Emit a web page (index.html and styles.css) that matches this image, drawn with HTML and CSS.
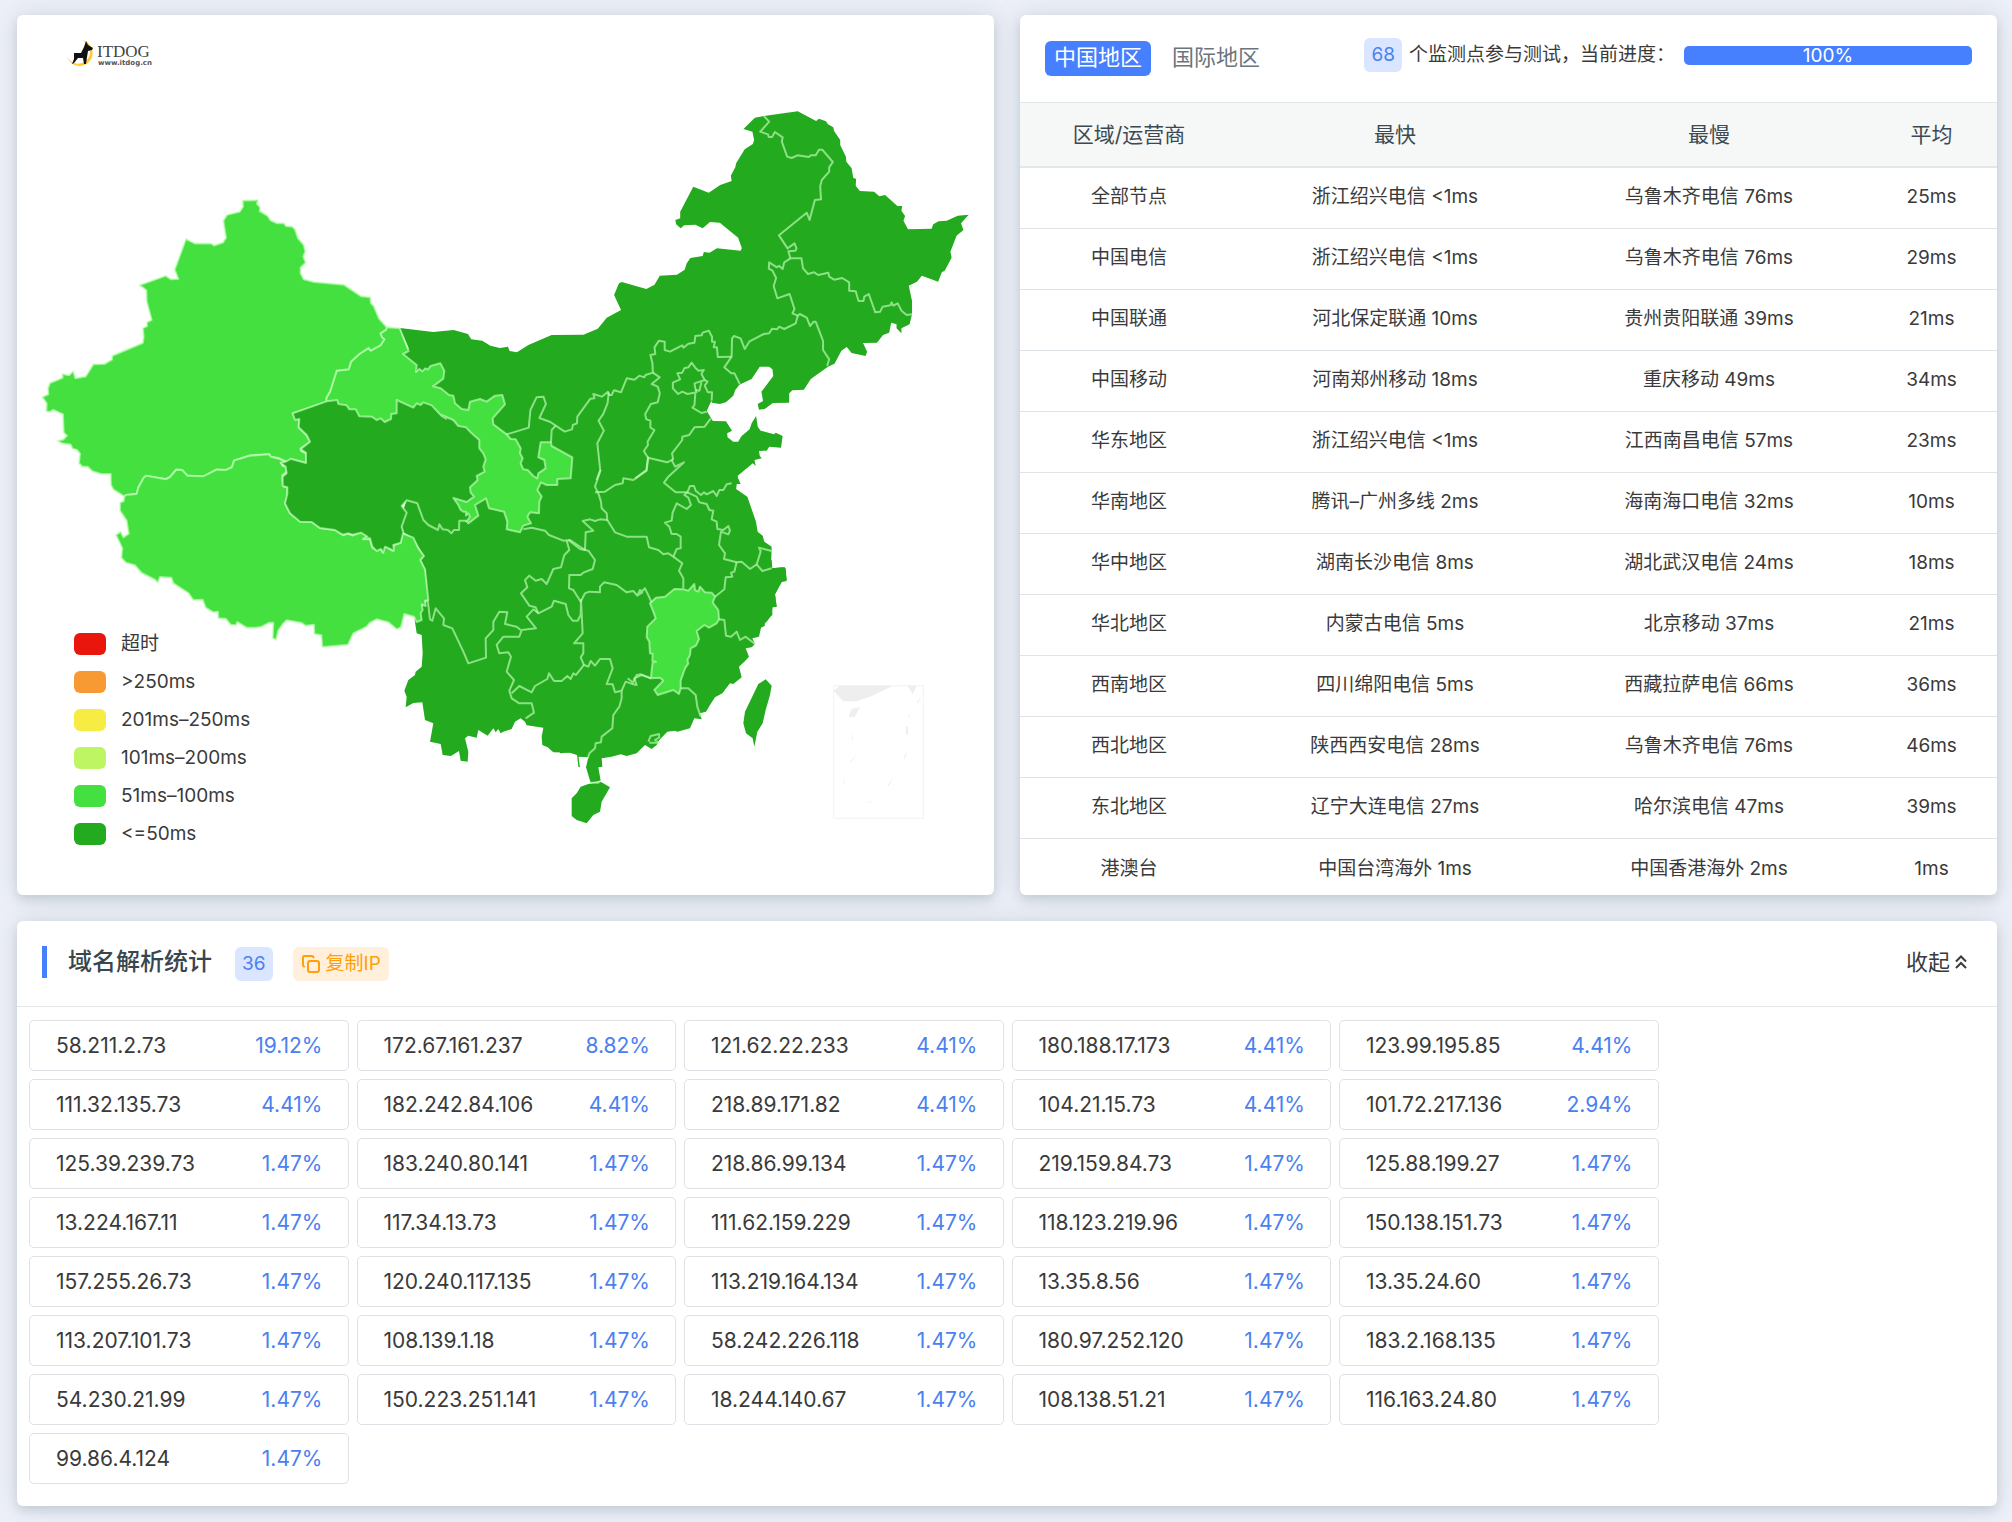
FILE: index.html
```html
<!DOCTYPE html>
<html lang="zh-CN">
<head>
<meta charset="utf-8">
<title>ITDOG</title>
<link rel="stylesheet" href="styles.css">
</head>
<body>
<main class="page">
  <div class="top">
    <section class="card map-card">
      <svg class="map" viewBox="17 15 977 880" role="img" aria-label="中国地图">
        <!-- mainland -->
        <g class="fast">
          <polygon transform="matrix(.40816 0 0 .33333 370 80)" points="73,744 155,756 205,750 240,762 248,778 275,782 295,797 318,804 338,800 342,813 360,817 388,795 445,765 523,764 558,746 580,713 615,690 598,645 610,610 617,606 677,627 697,614 710,587 752,584 771,569 776,550 785,534 815,528 818,516 832,518 850,505 873,508 908,512 911,505 902,473 857,428 833,426 815,445 797,434 770,436 761,445 750,433 748,420 760,415 760,395 792,320 830,338 858,315 886,303 884,287 895,262 897,250 918,208 938,192 941,180 937,155 915,147 943,113 965,108 1048,94 1093,123 1100,116 1117,124 1122,133 1135,142 1137,153 1152,180 1152,195 1166,230 1167,245 1180,265 1184,293 1191,297 1190,317 1200,333 1235,335 1248,349 1262,345 1292,378 1304,378 1302,392 1311,408 1307,422 1318,448 1376,446 1380,433 1393,424 1413,422 1440,407 1467,404 1448,430 1454,450 1437,467 1422,515 1425,533 1408,572 1401,577 1392,605 1352,587 1340,605 1320,617 1328,663 1328,703 1322,733 1302,745 1302,760 1290,745 1290,733 1277,728 1272,758 1257,765 1242,788 1208,789 1218,815 1214,828 1180,819 1168,801 1155,812 1138,851 1122,860 1080,897 1063,929 1035,931 1027,940 1027,968 987,969 967,987 953,989 950,972 963,963 959,935 988,888 986,868 978,860 955,860 935,897 905,914 895,930 890,947 872,967 857,972 838,968 836,963 825,993 840,1023 872,1024 887,1052 875,1060 876,1072 890,1085 902,1085 910,1069 930,1048 935,1030 946,1008 950,1040 957,1052 990,1063 994,1058 1011,1068 1007,1103 978,1100 972,1112 953,1113 955,1128 960,1135 942,1140 945,1158 938,1150 901,1187 890,1300 150,1300 150,900 110,870 80,820 95,805"/>
          <polygon transform="matrix(.33333 0 0 .33333 530 330)" points="620,435 632,462 607,462 615,475 652,500 678,575 683,605 698,617 703,635 725,650 723,715 765,712 770,750 755,755 735,793 740,830 727,832 725,855 710,875 695,890 500,900 300,700 300,300 500,330"/>
          <polygon transform="matrix(.33333 0 0 .33333 560 560)" points="635,0 637,25 668,22 677,25 680,63 665,66 645,103 650,140 637,142 637,165 612,185 615,197 603,203 597,230 577,235 585,252 575,262 557,265 567,290 553,305 537,320 545,352 520,372 510,370 487,400 465,412 450,435 438,455 420,460 425,478 403,475 390,505 352,515 345,512 322,515 298,540 290,555 275,567 255,555 230,580 200,588 182,583 155,590 125,595 127,620 115,622 122,662 92,668 78,622 85,592 55,590 60,622 55,620 52,585 30,577 0,580 0,0"/>
          <polygon transform="matrix(.33333 0 0 .33333 250 370)" points="1015,1160 985,1157 985,1190 982,1155 960,1148 910,1147 893,1132 877,1125 875,1100 880,1073 830,1066 825,1055 812,1045 795,1055 785,1077 760,1085 752,1090 745,1077 737,1087 730,1075 713,1097 685,1080 680,1103 655,1097 645,1105 655,1145 653,1175 632,1172 627,1143 603,1158 578,1155 572,1122 540,1115 550,1060 525,1050 517,997 490,999 467,1012 470,980 463,962 475,930 495,915 497,905 515,890 518,850 515,795 500,790 494,750 497,740 515,712 533,690 527,600 512,570 522,558 490,505 460,487 450,450 500,300 900,-100 1200,-100 1300,300 1400,500 1400,900 1200,1110"/>
        </g>
        <!-- Hainan, Taiwan -->
        <g class="fast" transform="matrix(.33333 0 0 .33333 560 560)">
          <polygon points="35,715 50,700 62,680 85,672 122,665 150,682 125,725 120,755 100,765 80,790 50,780 35,768"/>
          <polygon points="595,372 617,358 635,377 630,405 617,450 608,490 592,515 583,560 578,535 558,520 550,490 555,455"/>
        </g>
        <!-- Gansu, Xinjiang, Tibet, Jiangxi -->
        <g class="mid">
          <polygon transform="matrix(.33333 0 0 .33333 250 370)" points="410,-128 449,-125 476,-57 459,-48 500,-15 498,6 508,-3 517,4 526,-5 533,-1 542,-12 571,-20 583,2 580,26 549,49 572,55 597,75 610,77 615,100 635,117 655,120 660,95 690,87 710,95 735,77 757,75 765,103 728,145 730,163 770,193 782,207 797,208 812,235 810,250 818,265 812,280 820,298 833,300 850,318 862,325 865,310 887,295 883,270 865,262 872,217 903,217 905,228 967,262 962,325 922,327 922,345 890,345 873,337 862,360 875,380 868,395 867,430 840,427 832,440 843,460 820,467 810,487 770,478 772,455 762,425 717,415 708,385 675,405 685,437 655,460 600,400 600,200 400,180 230,120 228,94 229,83 240,65 260,2 296,-2 303,-25 328,-48 356,-66 362,-58 391,-74 403,-92 396,-97 391,-110 408,-121"/>
          <polygon transform="matrix(.33333 0 0 .34439 0 0)" points="728,582 774,581 771,592 781,603 779,613 803,627 812,640 830,648 852,648 858,657 876,658 885,666 894,692 911,711 916,730 910,745 917,763 902,777 902,794 911,811 942,819 1032,827 1083,860 1111,863 1113,880 1122,890 1137,925 1160,950 1158,957 1141,968 1146,980 1153,985 1141,1003 1112,1018 1106,1010 1078,1028 1053,1050 1046,1072 1010,1076 990,1137 979,1155 979,1167 879,1200 886,1217 898,1213 896,1241 918,1262 931,1283 902,1302 904,1310 918,1317 918,1344 872,1333 869,1340 857,1340 836,1330 812,1326 808,1319 751,1322 702,1337 696,1356 677,1365 650,1363 610,1384 562,1381 547,1365 529,1363 510,1384 497,1391 439,1382 431,1388 415,1415 410,1434 378,1437 373,1442 340,1421 333,1408 332,1376 303,1376 277,1368 263,1355 247,1355 237,1345 240,1318 232,1307 217,1302 212,1291 187,1288 173,1280 190,1276 201,1265 191,1256 189,1203 160,1190 150,1196 139,1194 140,1171 127,1153 145,1145 144,1127 150,1112 188,1097 187,1086 207,1090 220,1078 226,1098 257,1093 280,1058 313,1057 336,1044 337,1033 428,996 431,980 429,953 441,947 441,936 455,929 440,874 439,843 419,828 497,801 513,811 535,810 524,783 558,694 584,707 633,707 642,713 669,704 678,690 670,641 681,624 719,615 729,600"/>
          <polygon transform="matrix(.33333 0 0 .33333 0 440)" points="373,170 378,165 410,162 415,143 431,113 439,107 497,118 510,112 529,89 547,91 562,107 610,109 650,89 677,90 696,82 702,62 751,47 808,43 812,50 836,56 857,66 843,70 848,78 859,81 859,97 847,105 848,125 852,140 862,142 862,170 855,190 870,220 900,244 935,245 960,264 1005,270 1030,286 1043,281 1058,287 1082,276 1103,288 1090,297 1110,298 1116,322 1130,331 1142,326 1148,338 1153,318 1178,333 1182,315 1202,309 1207,280 1240,293 1255,325 1272,348 1261,360 1275,388 1285,480 1275,482 1277,498 1265,493 1268,510 1262,520 1265,540 1250,546 1242,530 1213,522 1203,562 1190,568 1165,547 1130,538 1110,548 1100,560 1060,580 1044,614 967,621 964,586 943,582 942,554 917,557 903,548 860,541 848,553 835,572 828,600 818,594 820,548 808,548 785,560 768,563 740,563 712,546 708,556 692,554 677,536 655,535 654,515 640,517 617,503 608,479 580,480 565,459 520,430 514,413 480,411 473,428 465,419 425,399 405,376 378,368 364,353 367,325 360,310 348,285 362,275 370,292 386,281 380,242 360,212 360,188 371,183"/>
          <polygon transform="matrix(.33333 0 0 .33333 560 560)" points="270,130 288,113 315,110 343,87 370,88 385,92 403,72 405,90 415,95 420,80 435,97 455,98 465,110 458,128 475,150 477,178 470,190 447,203 433,195 410,213 417,237 408,257 392,265 390,285 382,300 385,310 375,325 362,362 362,385 357,402 340,390 293,405 283,390 310,362 300,353 273,355 275,330 278,308 288,305 277,303 278,282 270,280 268,245 260,232 262,200 287,175 280,155"/>
        </g>
        <!-- Qinghai -->
        <polygon class="fast edged" transform="matrix(.33333 0 0 .33333 250 370)" points="128,130 230,94 262,90 265,102 290,106 298,118 317,118 328,139 365,140 380,150 392,145 404,156 423,147 424,132 440,130 440,90 490,113 500,100 512,105 520,97 545,106 575,138 588,146 575,135 610,150 625,168 648,172 660,185 688,210 688,235 700,250 707,268 700,290 704,305 680,318 683,330 660,352 662,368 672,380 650,396 610,384 625,405 632,420 640,425 648,425 648,437 655,430 660,440 652,452 628,452 627,480 612,480 604,490 594,480 578,478 568,463 564,480 535,465 520,450 502,400 470,391 455,408 470,428 455,470 460,487 452,518 430,525 432,542 405,530 400,548 393,537 380,543 367,530 360,505 340,508 352,500 333,488 308,494 295,490 278,494 255,480 210,474 185,456 150,455 120,430 105,400 112,372 112,352 98,348 98,320 110,310 107,290 92,278 107,275 120,268 122,266 168,279 168,248 152,238 180,215 170,195 146,172 148,147 135,150"/>
        <!-- province borders: north -->
        <g class="borders" transform="matrix(.40816 0 0 .33333 370 80)">
          <polyline points="965,108 978,125 956,155 975,163 977,171 985,171 992,156 1011,172 1009,185 1022,230 1033,234 1047,226 1075,231 1080,226 1092,226 1100,209 1108,209 1134,246 1125,262 1125,275 1107,300 1103,318 1105,358 1090,360 1077,420 1070,398 1002,466 1023,505 1040,490 1045,505 1042,512 1025,514 1030,535 1057,535 1061,565 1073,582 1088,577 1098,585 1123,578 1125,590 1137,599 1157,594 1174,607 1174,632 1190,634 1197,663 1209,663 1211,650 1222,642 1238,697 1250,695 1256,680 1275,676 1278,667 1282,677 1293,670 1302,692 1315,705 1328,703"/>
          <polyline points="1030,535 1015,547 1011,567 1002,557 997,562 978,547 977,566 986,572 995,594 989,618 998,655 1028,642 1040,687 1035,700 1048,707 1053,702 1070,713 1078,738 1087,725 1092,725 1110,783 1110,810 1125,838 1120,858"/>
          <polyline points="1048,707 1043,730 1015,747 1002,740 998,748 985,746 978,760 965,762 930,784 918,807 908,775 892,768 887,775 886,830 868,862 885,880 893,880 906,912"/>
          <polyline points="886,830 852,831 850,802 842,802 845,785 838,785 838,770 830,752 815,758 813,766 797,768 795,788 780,791 768,803 765,796 735,815 722,810 722,785 708,782 697,802 699,822 687,825 692,850 693,878 675,885 672,892 660,887 648,899 629,895 615,937 598,931 592,945 585,945 583,935 568,950 547,942 550,955 540,956 508,1010 507,1030 497,1035 495,1048 477,1055 455,1037 442,1026 415,1014 431,972 425,950 408,952 393,990 389,1043 333,1064"/>
          <polyline points="693,878 710,892 690,912 705,920 710,940 705,967 688,972 674,1003 677,1018 687,1022 687,1043 697,1050 680,1085 681,1095 671,1113 681,1133 677,1170 650,1195"/>
          <polyline points="681,1133 728,1147 742,1138"/>
          <polyline points="585,937 582,970 571,1003 560,1022 573,1052 557,1090 564,1170 555,1200"/>
          <polygon points="788,848 797,863 805,872 818,870 812,882 820,900 795,910 797,925 800,937 778,942 765,935 755,942 742,925 742,908 760,898 753,880 765,878 770,865 780,862"/>
          <polyline points="820,900 827,905 820,917 828,937 838,937 837,962"/>
          <polyline points="812,907 807,932 797,930"/>
          <polyline points="797,940 795,975 790,983 812,999 825,995"/>
          <polyline points="835,1015 820,1040 795,1042 782,1065 765,1070 765,1080 740,1120 743,1140"/>
        </g>
        <!-- province borders: centre and east -->
        <g class="borders" transform="matrix(.33333 0 0 .33333 530 330)">
          <polyline points="425,390 435,410 462,397 415,440 402,458 437,487 472,487 480,468 492,468 497,482 513,495 522,487 530,493 550,483 560,498 568,480 580,480 590,463 605,460"/>
          <polyline points="355,380 350,422 310,450 280,445 278,460 255,465 225,485 195,487"/>
          <polyline points="212,420 195,470 205,490 213,515 215,535 230,550 232,570 255,607 290,620 350,620 357,652 385,660 400,673 415,670 430,680 440,657 452,655 452,620 440,612 425,612 418,590 405,578 425,572 428,548 440,520 470,537 483,525 475,503 463,495 472,487 500,500 508,517 530,522 538,540 550,542 545,568 560,575 562,597 580,600 595,588 600,602 595,613 573,605 567,645 585,670 582,687 620,697 635,695 660,717 680,703 692,665 687,653 725,663"/>
          <polyline points="232,570 210,568 195,573 180,568 158,573 190,602 167,607 165,660"/>
          <polyline points="430,680 457,700 447,722 460,745 460,775"/>
          <polyline points="680,703 697,723 725,715"/>
          <polyline points="620,697 613,725 603,728 607,740 587,742 583,778 555,800"/>
          <polyline points="115,630 150,657 175,662 195,690 188,717 160,728 152,735 118,735 117,775 130,780 152,815 165,790 178,785 210,787 210,770 222,757 260,765 290,787 310,783 322,797 330,780 337,787 325,795 345,775 357,800 365,818"/>
        </g>
        <!-- province borders: south-west -->
        <g class="borders" transform="matrix(.33333 0 0 .33333 250 370)">
          <polyline points="917,167 905,180 903,217"/>
          <polyline points="820,478 845,473 885,482 897,495 940,512 960,510 1005,540"/>
          <polyline points="950,512 958,540 943,555 933,592 910,597 890,642 875,627 857,632 838,617 825,630 832,652 813,670 838,707 857,712 865,730 905,710 912,692 947,702 955,735 968,752 983,752 992,735 993,690 998,790 972,820 1000,820 1000,850 992,862 1002,885"/>
          <polyline points="865,730 850,718 830,740 858,775 815,780 808,800 760,800 748,815 740,825 748,850 775,847 783,860 770,905 792,930 778,962 785,985 808,1000 845,1000 852,1028 827,1045"/>
          <polyline points="785,970 808,948 845,967 855,948 892,927 897,910 912,933 935,933 952,918 962,927 970,910 978,915 1002,885 1015,890 1022,873 1035,887 1050,867 1080,867 1088,895 1070,942 1088,943 1095,967 1115,962 1115,985 1108,1010 1090,1035 1087,1075 1055,1100 1053,1117 1037,1120 1035,1135 1018,1150 1013,1165"/>
          <polyline points="1115,962 1127,935 1150,943 1160,945 1153,925 1175,915 1203,925"/>
          <polyline points="533,690 540,748 547,752 557,715 582,745 580,765 607,775 640,845 655,880 708,863 707,805 730,780 730,755 748,725 772,727 765,762 800,770 812,780"/>
        </g>
        <!-- province borders: south-east coast -->
        <g class="borders" transform="matrix(.33333 0 0 .33333 560 560)">
          <polyline points="203,355 212,362 218,368 230,345 243,343 273,355"/>
          <polyline points="477,178 493,180 498,227 513,230 530,215 540,240 557,230 585,252"/>
          <polyline points="362,385 385,385 407,405 412,440 422,470"/>
          <polyline points="265,545 272,528 297,522 298,532 285,540 297,548 268,548"/>
          <polyline points="88,668 115,668 122,662"/>
        </g>
        <!-- South China Sea inset -->
        <g class="inset" transform="matrix(.33333 0 0 .33333 560 560)">
          <rect x="821" y="377" width="269" height="398"/>
          <path d="M821 392L840 377H1000L930 410L890 424H850ZM1043 377H1070L1058 403ZM875 446L900 442L884 470L866 472ZM1085 406L1070 428L1074 430ZM1050 458L1044 470L1048 470ZM1038 500H1044V524H1038ZM1042 572L1030 594L1034 596ZM874 516L880 540L877 540ZM892 582L870 606L874 606ZM849 652L856 676L852 672ZM1003 648L981 678L986 678ZM948 721L924 730L926 727Z"/>
        </g>
      </svg>
      <div class="brand">
        <svg viewBox="0 0 88 30" width="88" height="30" role="img" aria-label="ITDOG">
          <path d="M15 1A13 13 0 1 1 1 17A12 12 0 1 0 15 1Z" fill="#fc3"/>
          <path d="M20 2L22 6L27 9L26 11L22 12L21 18L20 25H18L17 19L12 19L8 24L6 25L8 20L8 14H15L18 8Z" fill="#111"/>
          <text x="31" y="18" class="brand-name">ITDOG</text>
          <text x="32" y="26" class="brand-url">www.itdog.cn</text>
        </svg>
      </div>
      <ul class="legend">
        <li><i class="swatch timeout"></i>超时</li>
        <li><i class="swatch over250"></i>&gt;250ms</li>
        <li><i class="swatch to250"></i>201ms–250ms</li>
        <li><i class="swatch to200"></i>101ms–200ms</li>
        <li><i class="swatch to100"></i>51ms–100ms</li>
        <li><i class="swatch to50"></i>&lt;=50ms</li>
      </ul>
    </section>

    <section class="card">
      <header class="result-head">
        <div class="tabs">
          <button type="button" class="tab active">中国地区</button>
          <button type="button" class="tab">国际地区</button>
        </div>
        <div class="status">
          <span class="badge">68</span>
          <span class="status-text">个监测点参与测试，当前进度：</span>
          <div class="progress" role="progressbar" aria-valuenow="100" aria-valuemin="0" aria-valuemax="100">100%</div>
        </div>
      </header>
      <table class="result">
        <thead><tr><th class="area">区域/运营商</th><th>最快</th><th>最慢</th><th class="average">平均</th></tr></thead>
        <tbody>
          <tr><td>全部节点</td><td>浙江绍兴电信 &lt;1ms</td><td>乌鲁木齐电信 76ms</td><td>25ms</td></tr>
          <tr><td>中国电信</td><td>浙江绍兴电信 &lt;1ms</td><td>乌鲁木齐电信 76ms</td><td>29ms</td></tr>
          <tr><td>中国联通</td><td>河北保定联通 10ms</td><td>贵州贵阳联通 39ms</td><td>21ms</td></tr>
          <tr><td>中国移动</td><td>河南郑州移动 18ms</td><td>重庆移动 49ms</td><td>34ms</td></tr>
          <tr><td>华东地区</td><td>浙江绍兴电信 &lt;1ms</td><td>江西南昌电信 57ms</td><td>23ms</td></tr>
          <tr><td>华南地区</td><td>腾讯–广州多线 2ms</td><td>海南海口电信 32ms</td><td>10ms</td></tr>
          <tr><td>华中地区</td><td>湖南长沙电信 8ms</td><td>湖北武汉电信 24ms</td><td>18ms</td></tr>
          <tr><td>华北地区</td><td>内蒙古电信 5ms</td><td>北京移动 37ms</td><td>21ms</td></tr>
          <tr><td>西南地区</td><td>四川绵阳电信 5ms</td><td>西藏拉萨电信 66ms</td><td>36ms</td></tr>
          <tr><td>西北地区</td><td>陕西西安电信 28ms</td><td>乌鲁木齐电信 76ms</td><td>46ms</td></tr>
          <tr><td>东北地区</td><td>辽宁大连电信 27ms</td><td>哈尔滨电信 47ms</td><td>39ms</td></tr>
          <tr><td>港澳台</td><td>中国台湾海外 1ms</td><td>中国香港海外 2ms</td><td>1ms</td></tr>
        </tbody>
      </table>
    </section>
  </div>

  <section class="card">
    <header class="dns-head">
      <h2>域名解析统计</h2>
      <span class="badge">36</span>
      <button type="button" class="copy">
        <svg viewBox="0 0 20 20" width="20" height="20" fill="none" stroke="currentColor" stroke-width="2" stroke-linejoin="round" stroke-linecap="round" aria-hidden="true"><rect x="7" y="7" width="11" height="11" rx="2"/><path d="M3 12.500A1.500 1.500 0 0 1 2 11V3.500A1.500 1.500 0 0 1 3.500 2H11A1.500 1.500 0 0 1 12.500 3.500"/></svg>
        复制IP
      </button>
      <button type="button" class="collapse">收起
        <svg viewBox="0 0 14 16" width="14" height="16" fill="none" stroke="currentColor" stroke-width="2" aria-hidden="true"><path d="M2 7.500L7 2.500L12 7.500M2 14L7 9L12 14"/></svg>
      </button>
    </header>
    <ul class="ips">
      <li><span>58.211.2.73</span><b>19.12%</b></li>
      <li><span>172.67.161.237</span><b>8.82%</b></li>
      <li><span>121.62.22.233</span><b>4.41%</b></li>
      <li><span>180.188.17.173</span><b>4.41%</b></li>
      <li><span>123.99.195.85</span><b>4.41%</b></li>
      <li><span>111.32.135.73</span><b>4.41%</b></li>
      <li><span>182.242.84.106</span><b>4.41%</b></li>
      <li><span>218.89.171.82</span><b>4.41%</b></li>
      <li><span>104.21.15.73</span><b>4.41%</b></li>
      <li><span>101.72.217.136</span><b>2.94%</b></li>
      <li><span>125.39.239.73</span><b>1.47%</b></li>
      <li><span>183.240.80.141</span><b>1.47%</b></li>
      <li><span>218.86.99.134</span><b>1.47%</b></li>
      <li><span>219.159.84.73</span><b>1.47%</b></li>
      <li><span>125.88.199.27</span><b>1.47%</b></li>
      <li><span>13.224.167.11</span><b>1.47%</b></li>
      <li><span>117.34.13.73</span><b>1.47%</b></li>
      <li><span>111.62.159.229</span><b>1.47%</b></li>
      <li><span>118.123.219.96</span><b>1.47%</b></li>
      <li><span>150.138.151.73</span><b>1.47%</b></li>
      <li><span>157.255.26.73</span><b>1.47%</b></li>
      <li><span>120.240.117.135</span><b>1.47%</b></li>
      <li><span>113.219.164.134</span><b>1.47%</b></li>
      <li><span>13.35.8.56</span><b>1.47%</b></li>
      <li><span>13.35.24.60</span><b>1.47%</b></li>
      <li><span>113.207.101.73</span><b>1.47%</b></li>
      <li><span>108.139.1.18</span><b>1.47%</b></li>
      <li><span>58.242.226.118</span><b>1.47%</b></li>
      <li><span>180.97.252.120</span><b>1.47%</b></li>
      <li><span>183.2.168.135</span><b>1.47%</b></li>
      <li><span>54.230.21.99</span><b>1.47%</b></li>
      <li><span>150.223.251.141</span><b>1.47%</b></li>
      <li><span>18.244.140.67</span><b>1.47%</b></li>
      <li><span>108.138.51.21</span><b>1.47%</b></li>
      <li><span>116.163.24.80</span><b>1.47%</b></li>
      <li><span>99.86.4.124</span><b>1.47%</b></li>
    </ul>
  </section>
</main>
</body>
</html>
```
FILE: styles.css
```css
* { box-sizing: border-box; }

body {
  margin: 0;
  background: #edf0f9;
  color: #3a3a3a;
  font-family: Inter, "Noto Sans CJK SC", sans-serif;
  font-size: 19px;
  line-height: 28px;
}

ul { margin: 0; padding: 0; list-style: none; }

button {
  border: 0;
  background: none;
  color: inherit;
  font: inherit;
  cursor: pointer;
}

.page {
  display: grid;
  gap: 26px;
  padding: 15px 15px 16px 17px;
}

.top {
  display: grid;
  grid-template-columns: 1fr 1fr;
  gap: 26px;
}

.card {
  background: #fff;
  border-radius: 6px;
  box-shadow: 0 5px 10px rgba(100, 120, 130, .2), 0 0 26px rgba(120, 130, 130, .22);
}

/* Map card: the logo and the legend share one grid cell with the map */
.map-card { display: grid; }
.map-card > * { grid-area: 1 / 1; }

.map { display: block; width: 100%; }
.fast { fill: #23aa1e; }
.mid { fill: #43e03f; }
.mid, .edged, .borders {
  stroke: #c4ffbc;
  stroke-opacity: .65;
  stroke-width: 2px;
  stroke-linejoin: round;
}
.mid > *, .edged, .borders > * { vector-effect: non-scaling-stroke; }
.borders { fill: none; }
.inset path { fill: #eee; }
.inset rect { fill: none; stroke: #f3f3f3; stroke-width: 3px; }

.brand { justify-self: start; align-self: start; padding: 24px 0 0 49px; }
.brand svg { display: block; }
.brand-name { font: 17px "Liberation Serif", serif; fill: #444; }
.brand-url { font: bold 7px "DejaVu Sans", sans-serif; fill: #555; }

.legend {
  justify-self: start;
  align-self: end;
  display: grid;
  gap: 10px;
  padding: 0 0 47px 57px;
}
.legend li { display: flex; align-items: center; gap: 15px; }
.swatch { width: 32px; height: 22px; border-radius: 6px; }
.timeout { background: #e9160d; }
.over250 { background: #f79a34; }
.to250 { background: #f7ec43; }
.to200 { background: #bef663; }
.to100 { background: #43e03f; }
.to50 { background: #23aa1e; }

.badge {
  padding: 3px 7px;
  border-radius: 6px;
  background: #dae6ff;
  color: #4a80f0;
}

.result-head {
  display: flex;
  justify-content: space-between;
  align-items: flex-start;
  height: 88px;
  padding: 23px 25px 0;
  border-bottom: 1px solid #e3e7eb;
}
.tabs { display: flex; gap: 12px; padding-top: 3px; }
.tab {
  padding: 2px 9px 5px;
  border-radius: 6px;
  color: #6c757d;
  font-size: 22px;
}
.tab.active { background: #4680ff; color: #fff; }

.status { display: flex; align-items: center; }
.status-text { margin: 0 9px 0 7px; }
.progress {
  width: 288px;
  height: 19px;
  border-radius: 5px;
  background: #4680ff;
  color: #fff;
  line-height: 19px;
  text-align: center;
}

.result { width: 100%; border-collapse: collapse; table-layout: fixed; text-align: center; }
.area { width: 218px; }
.average { width: 131px; }
.result th {
  height: 64px;
  padding: 0;
  border-bottom: 2px solid #e3e7eb;
  background: #f6f7f7;
  color: #3b4a52;
  font-size: 21px;
  font-weight: 400;
}
.result td { height: 61px; padding: 0 0 1px; border-bottom: 1px solid #dfe4e8; }
.result tr:last-child td { height: 54px; padding-top: 9px; border: 0; }

.dns-head {
  display: flex;
  align-items: center;
  height: 86px;
  padding: 0 25px;
  border-bottom: 1px solid #e3e5e8;
}
.dns-head h2 {
  margin: 0 23px 4px 0;
  padding-left: 21px;
  border-left: 5px solid #4680ff;
  color: #37474f;
  font-size: 24px;
  font-weight: 500;
  line-height: 32px;
}
.copy {
  display: flex;
  align-items: center;
  gap: 5px;
  margin-left: 20px;
  padding: 3px 8px;
  border-radius: 6px;
  background: #ffefdb;
  color: #ff9f0a;
}
.collapse {
  display: flex;
  align-items: center;
  gap: 4px;
  margin: 0 0 4px auto;
  padding-right: 4px;
  font-size: 22px;
}

.ips {
  display: grid;
  grid-template-columns: repeat(6, 1fr);
  gap: 8px;
  padding: 13px 11px 22px 12px;
}
.ips li {
  display: flex;
  justify-content: space-between;
  align-items: center;
  height: 51px;
  padding: 0 25px 0 26px;
  border: 1px solid #dee2e6;
  border-radius: 5px;
  font-size: 21px;
}
.ips b { color: #4a80f0; font-weight: 400; }
.ips li:nth-child(5n + 1) { grid-column: 1; }
```
